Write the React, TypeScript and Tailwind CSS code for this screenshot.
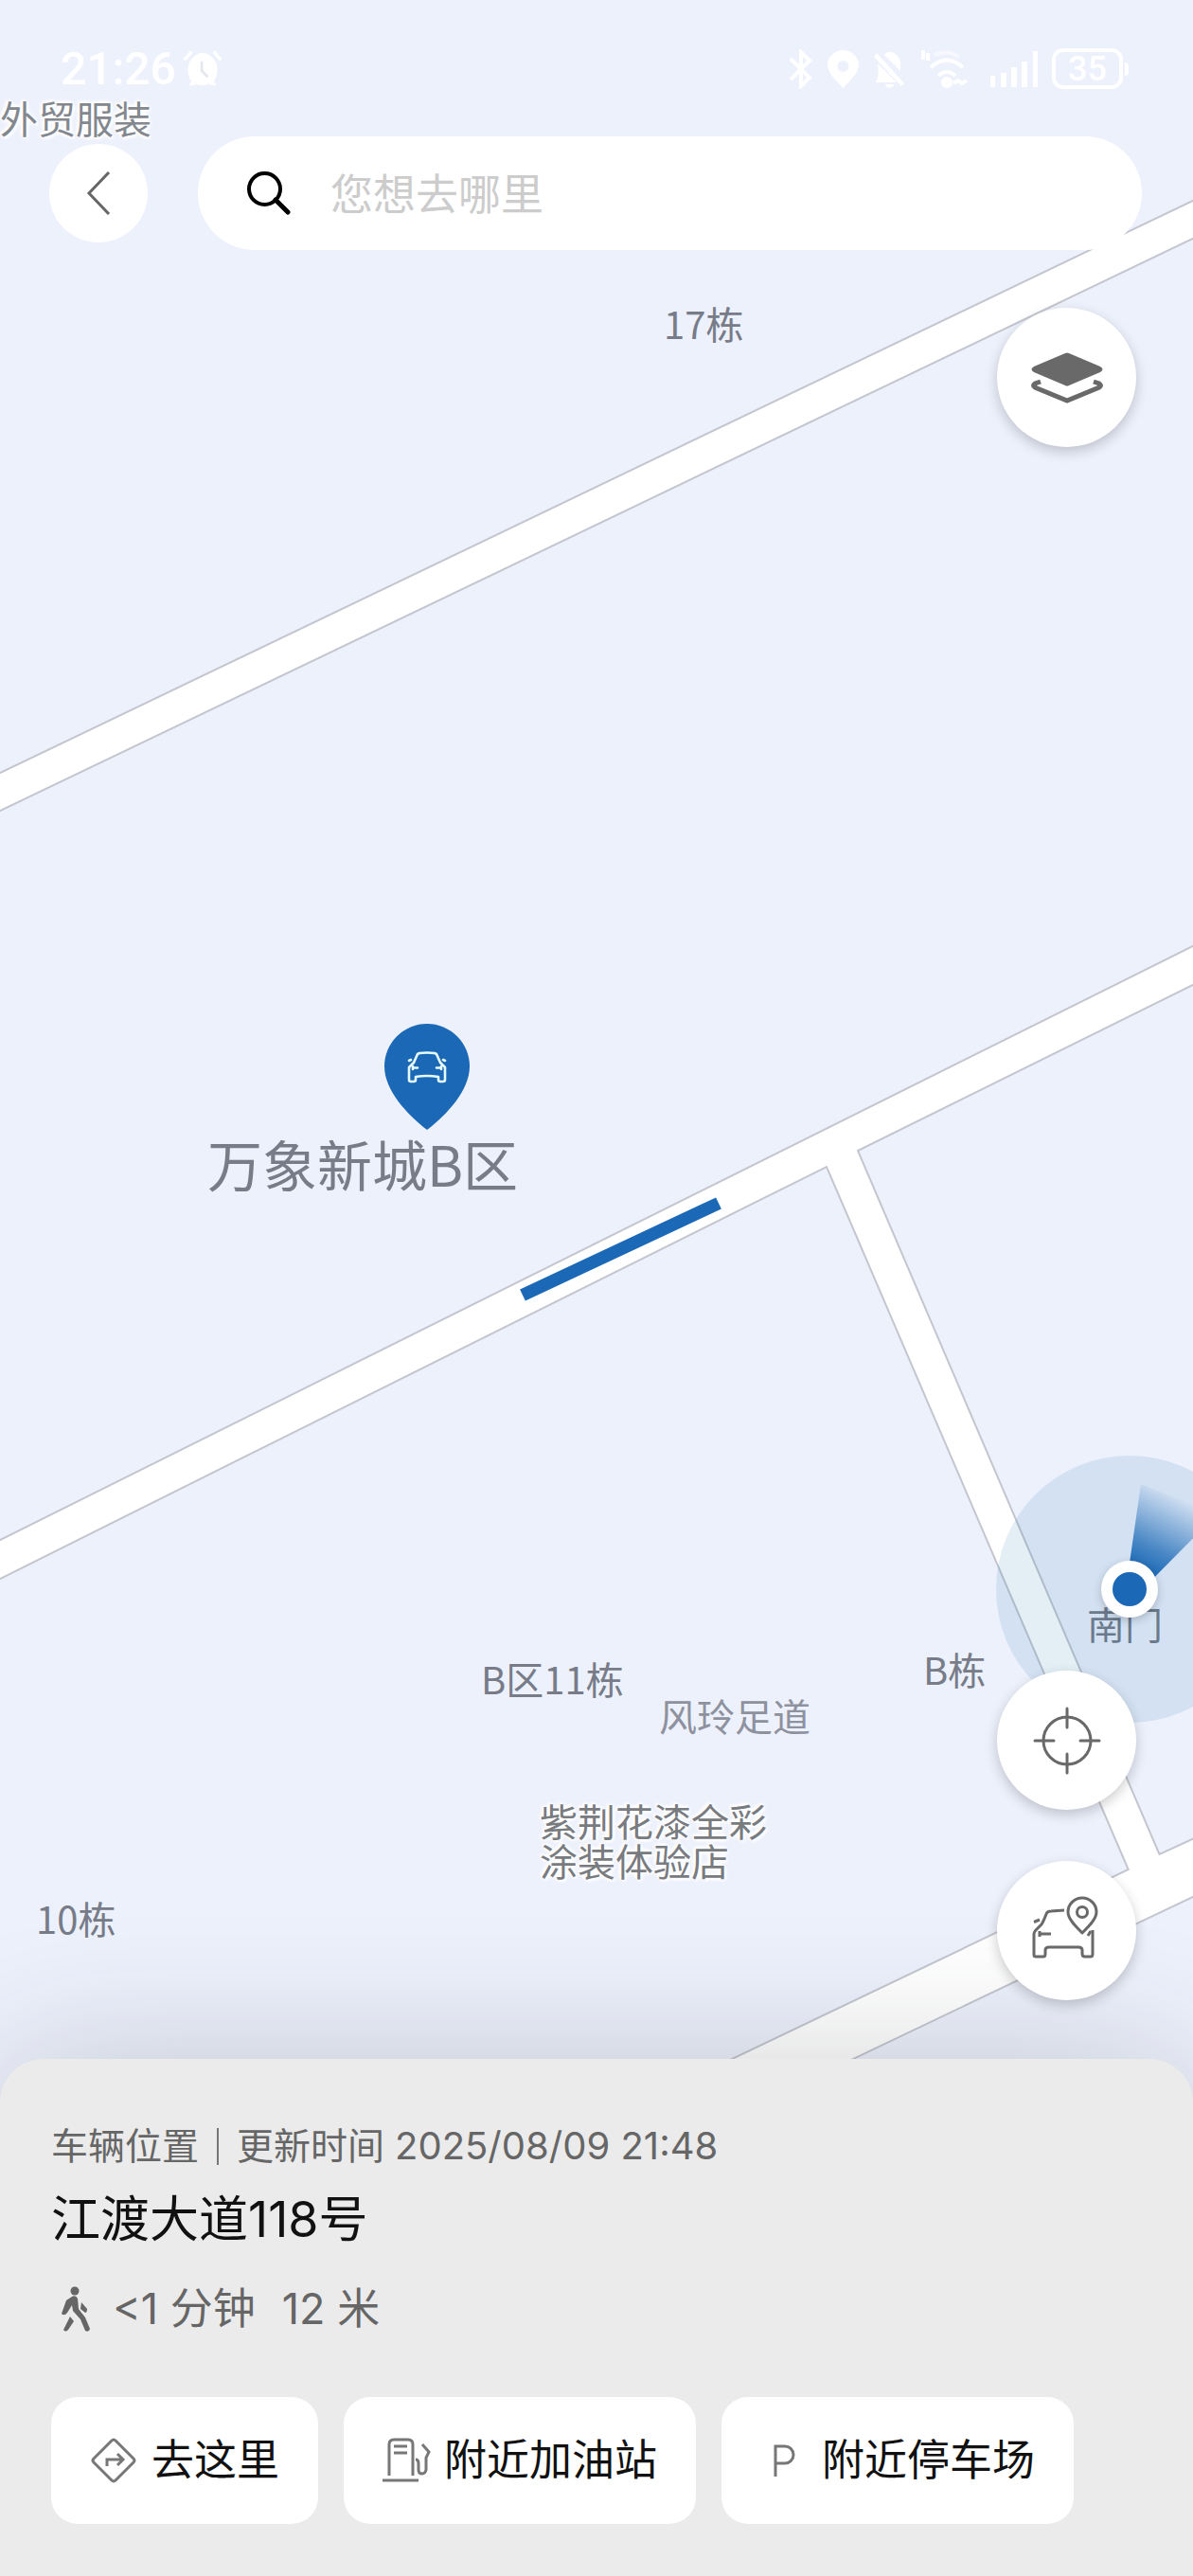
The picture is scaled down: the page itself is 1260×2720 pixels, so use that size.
import type { ReactNode } from "react";

function StatusBar() {
  return (
    <div className="flex h-[43px] items-center justify-between pl-[64px] pr-[68px] text-white">
      <div className="flex items-center gap-2">
        <span className="font-['Roboto'] text-[48px] leading-[43px] font-medium">21:26</span>
        <svg className="h-[42px] w-[40px]" viewBox="0 0 44 42" aria-label="闹钟">
          <path d="M8 2 2 9M36 2l6 7" stroke="currentColor" strokeWidth="4" strokeLinecap="round" />
          <path fill="currentColor" d="M22 2a19 19 0 0 1 17 19c0 7-2 11-4 14l3 5h-6l-2-2a19 19 0 0 1-16 0l-2 2H6l3-5C6 31 5 27 5 21A19 19 0 0 1 22 2Z" />
          <path d="M21 12v11l7 7" fill="none" stroke="#e4e7ee" strokeWidth="3" />
        </svg>
      </div>
      <div className="flex items-center gap-[15px]">
        <svg className="h-[42px] w-[27px]" viewBox="0 0 27 42" fill="none" stroke="currentColor" strokeWidth="4" aria-label="蓝牙">
          <path d="m3 10 20 20-9 9V3l9 9L3 32" />
        </svg>
        <svg className="h-[40px] w-[33px]" viewBox="0 0 33 40" aria-label="定位">
          <path fill="currentColor" fillRule="evenodd" d="M16.500 0C26 0 33 7 33 16c0 8-10 17-16.500 24C10 33 0 24 0 16 0 7 7 0 16.500 0Zm0 11a6 6 0 1 0 0 12 6 6 0 0 0 0-12Z" />
        </svg>
        <svg className="h-[40px] w-[34px]" viewBox="0 0 34 40" aria-label="静音">
          <path fill="currentColor" d="m4 3 29 32-3 3L1 7Zm11-1 5 0c6 2 9 7 9 13v7L12 5ZM5 14l20 20H3c3-4 3-8 2-20Zm8 22h9c-1 5-8 5-9 0Z" />
        </svg>
        <svg className="h-[40px] w-[54px]" viewBox="0 0 54 40" fill="none" stroke="currentColor" strokeWidth="4" aria-label="无线网络">
          <path d="M4 0v10m5-7v8M12 18q17-15 34 0M20 27q9-8 18 0" />
          <path d="M16 5q14-6 26 2" strokeOpacity="0.500" />
          <circle cx="29" cy="34" r="4" fill="currentColor" />
          <path d="m36 35 5-3 4 3 5-3" />
        </svg>
        <svg className="ml-[6px] h-[40px] w-[50px]" viewBox="0 0 50 40" fill="currentColor" aria-label="信号">
          <path d="M0 27h5v12H0zM11 24h6v15h-6zM22 18h6v21h-6zM33 12h6v27h-6zM45 1h5v38h-5z" />
        </svg>
        <div className="flex items-center gap-[2px]" aria-label="电量">
          <span className="flex h-[43px] w-[75px] items-center justify-center rounded-[12px] border-4 border-white font-['Roboto'] text-[36px] leading-none font-medium">35</span>
          <span className="h-[14px] w-[4px] rounded-r bg-white" />
        </div>
      </div>
    </div>
  );
}

function RoundButton({ label, children }: { label: string; children: ReactNode }) {
  return (
    <button aria-label={label} className="flex size-[147px] items-center justify-center rounded-full bg-white text-[#696969] shadow-[0_5px_14px_rgba(0,0,0,0.2)]">
      {children}
    </button>
  );
}

const LABEL = "absolute text-[40px] leading-[42px]";
const HALO = "[text-shadow:0_0_4px_#fff,0_0_4px_#fff,0_0_6px_#fff,2px_2px_3px_#fff,-2px_-2px_3px_#fff]";

function MapCanvas() {
  return (
    <div className="absolute inset-0 overflow-hidden whitespace-nowrap text-[#777c88]">
      <svg className="absolute top-0 left-0 h-[2720px] w-[1260px]" viewBox="0 0 1260 2720" fill="none">
        <g fill="#fff" stroke="#c3c6ce" strokeWidth="2">
          <path d="M-10 821 1270 207V247L-10 861Z" />
          <path d="M-10 1631 1270 994v41L906 1215l318.500 743 45.500-21v61L700 2270V2209L1191.700 1974 873 1232-10 1672Z" />
        </g>
        <path d="M552 1367.500 759 1270.500" stroke="#1b69b6" strokeWidth="13.500" />
      </svg>

      <span className={`${LABEL} ${HALO} top-[103px] left-0 text-[#83888f]`}>外贸服装</span>
      <span className={`${LABEL} top-[320px] left-[701px]`}>17栋</span>
      <span className="absolute top-[1194px] left-[219px] text-[58px] leading-[68px]">万象新城B区</span>
      <span className={`${LABEL} top-[1751px] left-[508px]`}>B区11栋</span>
      <span className={`${LABEL} top-[1790px] left-[696px] text-[#8e929f]`}>风玲足道</span>
      <span className={`${LABEL} top-[1741px] left-[975px]`}>B栋</span>
      <span className={`${LABEL} ${HALO} top-[1901px] left-[570px] w-[244px] break-all whitespace-normal text-[#787b80]`}>
        紫荆花漆全彩涂装体验店
      </span>
      <span className={`${LABEL} top-[2004px] left-[38px]`}>10栋</span>
      <span className={`${LABEL} top-[1693px] left-[1148px]`}>南门</span>

      <svg className="absolute top-[1081px] left-[406px] h-[113px] w-[90px]" viewBox="0 0 90 113" aria-label="车辆">
        <path fill="#1b69b6" d="M45 0a45 45 0 0 1 45 45C90 70 66 96 45 112 24 96 0 70 0 45A45 45 0 0 1 45 0Z" />
        <g fill="none" stroke="#e6fbff" strokeWidth="2.600" strokeLinecap="round" strokeLinejoin="round">
          <path d="m35 32 2-1q8-1 16 0l2 1 4 9 5 5v13q0 2-2 2h-3q-2 0-2-2v-3q-12-2-24 0v3q0 2-2 2h-3q-2 0-2-2V46l5-5Z" />
          <path d="m26 39 2-1M64 39l-2-1M30 45v3M30 46.500h5M60 45v3M60 46.500h-5" />
        </g>
      </svg>

      <svg className="absolute top-[1537px] left-[1052px] h-[282px] w-[282px]" viewBox="0 0 282 282" aria-label="当前位置">
        <defs>
          <linearGradient id="heading" gradientUnits="userSpaceOnUse" x1="141" y1="141" x2="190" y2="42">
            <stop offset="0.200" stopColor="#1b69b6" />
            <stop offset="0.450" stopColor="#1b69b6" stopOpacity="0.750" />
            <stop offset="1" stopColor="#1b69b6" stopOpacity="0" />
          </linearGradient>
        </defs>
        <circle cx="141" cy="141" r="141" fill="#1b74b0" fillOpacity="0.120" />
        <path d="M137 141 153 30l80 32L141 155Z" fill="url(#heading)" />
        <circle cx="141" cy="141" r="30" fill="#fff" className="drop-shadow-[0_3px_5px_rgba(0,0,0,0.2)]" />
        <circle cx="141" cy="141" r="18" fill="#1b69b6" />
      </svg>
    </div>
  );
}

function Action({ label, icon }: { label: string; icon: ReactNode }) {
  return (
    <button className="flex h-[134px] items-center gap-3 rounded-[28px] bg-white pr-[41px] pl-[38px] text-[45px] text-[#111]">
      <span className="flex w-[56px] justify-center text-[#777]">{icon}</span>
      {label}
    </button>
  );
}

function DetailPanel() {
  return (
    <section className="relative rounded-t-[46px] bg-[#ebebeb] px-[54px] pt-[64px] pb-[55px] text-[#666] shadow-[0_10px_160px_rgba(40,45,55,0.24)]">
      <p className="flex items-center text-[39px] leading-[56px]">
        车辆位置
        <span className="mx-[19px] h-[39px] w-[2px] bg-[#777]" />
        更新时间
        <time dateTime="2025-08-09T21:48" className="ml-[11px] text-[40px]">2025/08/09 21:48</time>
      </p>
      <h1 className="mt-[14px] text-[52px] leading-[72px] text-[#111]">江渡大道118号</h1>
      <p className="mt-[26px] flex items-center text-[45px] leading-[64px]">
        <svg className="mr-[24px] ml-[11px] h-[48px] w-[30px]" viewBox="0 0 30 48" aria-label="步行">
          <circle cx="14" cy="5" r="4.500" fill="currentColor" />
          <path fill="currentColor" d="M11 11q4-2 6 2l1 11 7 9 5 12q-1 4-5 2l-5-12-8-9-1-6-5 8q-3 4-6 1l5-14ZM9 32l4 5-6 9q-3 3-5 0ZM21 17l6 7q0 4-2 4l-5-4Z" />
        </svg>
        <span className="mr-[28px]">&lt;1 分钟</span>
        <span>12 米</span>
      </p>
      <div className="mt-[61px] flex flex-wrap gap-[27px]">
        <Action
          label="去这里"
          icon={
            <svg className="size-[48px]" viewBox="0 0 48 48" fill="none" stroke="currentColor" strokeWidth="3">
              <path d="M22 3q2-2 4 0l19 19q2 2 0 4L26 45q-2 2-4 0L3 26q-2-2 0-4Z" />
              <path d="M17 30v-7h16M28 17l6 6-6 6" />
            </svg>
          }
        />
        <Action
          label="附近加油站"
          icon={
            <svg className="h-[48px] w-[52px]" viewBox="0 0 52 48" fill="none" stroke="currentColor" strokeWidth="3">
              <path d="M1 45h38M8 40V7q0-5 5-5h15q5 0 5 5v33M13 9h14M13 16h14M43 7l7 8-3 6v13q-1 4-4 4-4 0-4-4v-7q0-4-3-4" />
            </svg>
          }
        />
        <Action
          label="附近停车场"
          icon={
            <svg className="h-[34px] w-[24px]" viewBox="0 0 24 34" fill="none" stroke="currentColor" strokeWidth="3">
              <path d="M3 34V2h10a9 9 0 0 1 0 18H3" />
            </svg>
          }
        />
      </div>
    </section>
  );
}

export default function App() {
  return (
    <main className="relative flex min-h-screen flex-col overflow-hidden bg-[#edf1fc] font-['Inter','Noto_Sans_CJK_SC',sans-serif]">
      <div className="absolute inset-0 font-['Noto_Sans_CJK_SC',sans-serif]">
        <MapCanvas />
      </div>
      <header className="relative pt-[51px]">
        <StatusBar />
        <div className="mt-[50px] flex items-center gap-[53px] pr-[54px] pl-[52px]">
          <button aria-label="返回" className="flex size-[104px] items-center justify-center rounded-full bg-white">
            <svg className="h-[46px] w-[26px]" viewBox="0 0 26 46" fill="none" stroke="#666" strokeWidth="3">
              <path d="M24 1 3 23l21 22" />
            </svg>
          </button>
          <label className="flex h-[120px] flex-1 items-center gap-[42px] rounded-full bg-white pr-8 pl-[52px]">
            <svg className="size-[46px] shrink-0" viewBox="0 0 46 46" fill="none" stroke="#000" strokeWidth="4" aria-hidden="true">
              <circle cx="18.500" cy="18.500" r="16.500" />
              <path d="m30 30 13 13" strokeWidth="5" strokeLinecap="round" />
            </svg>
            <input
              aria-label="目的地"
              placeholder="您想去哪里"
              className="min-w-0 flex-1 bg-transparent pt-1 text-[45px] leading-[64px] outline-none placeholder:text-[#ccc]"
            />
          </label>
        </div>
      </header>
      <div className="relative flex flex-1 flex-col items-end justify-between gap-12 pt-[61px] pr-[60px] pb-[62px]">
        <RoundButton label="图层">
          <svg className="h-[54px] w-[76px]" viewBox="0 0 76 54">
            <path fill="currentColor" d="M36 1q2-1 4 0l33 14q5 3 0 6L40 35q-2 1-4 0L3 21q-5-3 0-6Z" />
            <path d="M10 31l-6 2q-3 2 0 4l34 14 34-14q3-2 0-4l-6-2" fill="none" stroke="currentColor" strokeWidth="5" />
          </svg>
        </RoundButton>
        <div className="relative z-10 flex flex-col gap-[54px]">
          <RoundButton label="定位到我">
            <svg className="size-[72px]" viewBox="0 0 72 72" fill="none" stroke="currentColor" strokeWidth="3" strokeLinecap="round">
              <circle cx="36" cy="36" r="25" />
              <path d="M36 2v20M36 50v20M2 36h20M50 36h20" />
            </svg>
          </RoundButton>
          <RoundButton label="车辆位置">
            <svg className="mr-1 mb-2 h-[66px] w-[70px]" viewBox="0 0 70 66" fill="none" stroke="currentColor" strokeWidth="3" strokeLinejoin="round">
              <path d="m34 15-14 1q-4 0-5 3-3 8-5 11l-6 6q-2 2-2 4v22q0 2 2 2h8q2 0 2-3v-4q0-3 4-3h31q4 0 4 3v4q0 3 3 3h6q2 0 2-3V36" />
              <path d="M2 27.500 8 25M8 37v6M8 40h12M59 42l3-5" />
              <path d="M53 39C46 32 38 24 38 17a15 15 0 0 1 30 0c0 7-8 15-15 22Z" />
              <circle cx="53" cy="17" r="5.500" />
            </svg>
          </RoundButton>
        </div>
      </div>
      <DetailPanel />
    </main>
  );
}
